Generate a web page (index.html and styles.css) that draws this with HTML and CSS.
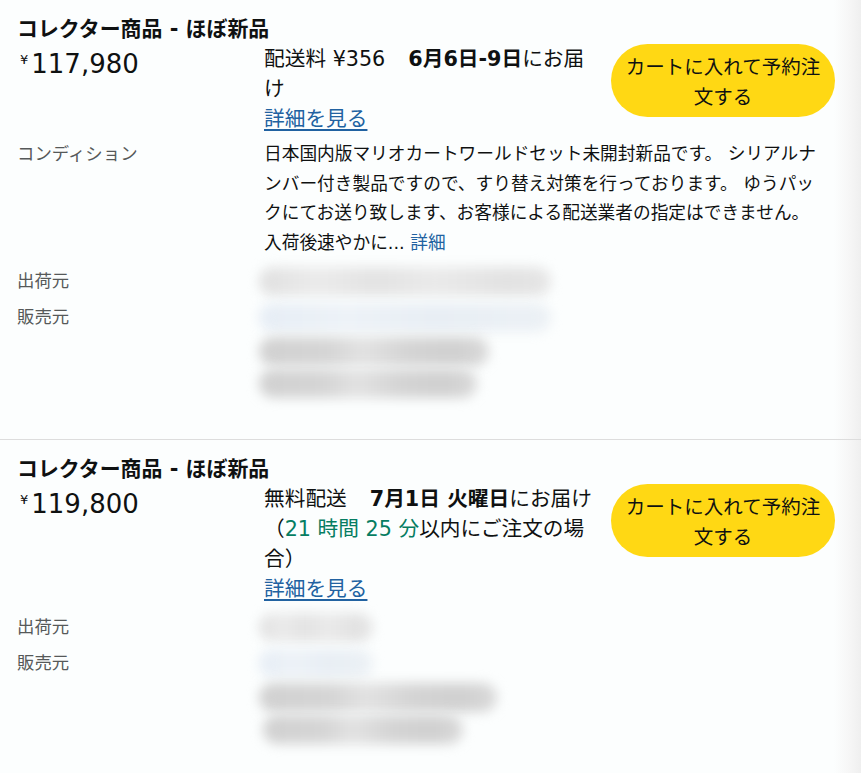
FILE: index.html
```html
<!DOCTYPE html>
<html lang="ja">
<head>
<meta charset="utf-8">
<title>出品者一覧</title>
<link rel="stylesheet" href="styles.css">
</head>
<body>
<div class="page">
  <section class="offer first">
    <h2 class="title">コレクター商品 - ほぼ新品</h2>
    <div class="main">
      <div class="price"><span class="yen">¥</span>117,980</div>
      <div class="delivery">
        <div>配送料 ¥356<b class="date">6月6日-9日</b>にお届<br>け</div>
        <div><a class="link" href="#">詳細を見る</a></div>
      </div>
      <button class="cart">カートに入れて予約注文する</button>
    </div>
    <div class="row cond">
      <div class="label cond-label">コンディション</div>
      <div class="cond-text"><span>日本国内版マリオカートワールドセット未開封新品です。 シリアルナンバー付き製品ですので、すり替え対策を行っております。 ゆうパックにてお送り致します、お客様による配送業者の指定はできません。</span><br><span>入荷後速やかに... </span><span class="more">詳細</span></div>
    </div>
    <div class="row info"><div class="label">出荷元</div><div class="value"><div class="blob gray w292"></div></div></div>
    <div class="row info"><div class="label">販売元</div><div class="value"><div class="blob blue w292"></div></div></div>
    <div class="row sub"><div class="label"></div><div class="value"><div class="blob dark w230"></div></div></div>
    <div class="row sub"><div class="label"></div><div class="value"><div class="blob dark w218"></div></div></div>
  </section>

  <section class="offer">
    <h2 class="title">コレクター商品 - ほぼ新品</h2>
    <div class="main">
      <div class="price"><span class="yen">¥</span>119,800</div>
      <div class="delivery">
        <div>無料配送<b class="date">7月1日 火曜日</b>にお届け<br>（<span class="green">21 時間 25 分</span>以内にご注文の場<br>合）</div>
        <div><a class="link" href="#">詳細を見る</a></div>
      </div>
      <button class="cart">カートに入れて予約注文する</button>
    </div>
    <div class="row info"><div class="label">出荷元</div><div class="value"><div class="blob gray w112"></div></div></div>
    <div class="row info"><div class="label">販売元</div><div class="value"><div class="blob blue w112"></div></div></div>
    <div class="row sub"><div class="label"></div><div class="value"><div class="blob dark w236"></div></div></div>
    <div class="row sub"><div class="label"></div><div class="value"><div class="blob dark w200 shift"></div></div></div>
  </section>
</div>
</body>
</html>
```

FILE: styles.css
```css
html, body {
  margin: 0;
  padding: 0;
}
body {
  width: 861px;
  height: 773px;
  overflow: hidden;
  background: linear-gradient(to right, #fcfefe 0, #fcfefe 834px, #f7f7f7 848px, #efefef 861px);
  font-family: "DejaVu Sans", "Noto Sans CJK JP", sans-serif;
  color: #0f1111;
}
.offer {
  padding: 15px 0 0 17px;
}
.offer.first {
  padding-bottom: 40px;
  border-bottom: 1px solid #dddddd;
}
.title {
  margin: 0 0 1px;
  font-size: 20.9px;
  line-height: 28px;
  font-weight: 700;
}
.main {
  display: flex;
  align-items: flex-start;
}
.price {
  width: 247px;
  font-size: 26px;
  line-height: 32px;
}
.yen {
  font-size: 13px;
  vertical-align: 9px;
  margin-left: 3px;
  margin-right: 3px;
}
.delivery {
  width: 340px;
  font-size: 20.7px;
  line-height: 30px;
}
.date {
  font-weight: 700;
  margin-left: 23px;
}
.green {
  color: #067d62;
}
.link {
  color: #2162a1;
  text-decoration: underline;
  text-underline-offset: 3px;
}
.cart {
  margin: 0 0 0 7px;
  width: 224px;
  height: 73px;
  box-sizing: border-box;
  padding: 0 12px;
  border: none;
  border-radius: 37px;
  background: #ffd814;
  color: #0f1111;
  font-family: "Noto Sans CJK JP", sans-serif;
  font-size: 19.5px;
  line-height: 30px;
  text-align: center;
}
.row {
  display: flex;
}
.label {
  width: 247px;
  flex: none;
  color: #565959;
  font-size: 17.4px;
}
.cond {
  margin-top: 6px;
}
.cond-label {
  line-height: 29.5px;
}
.cond-text {
  width: 562px;
  font-size: 17.7px;
  line-height: 29.5px;
}
.more {
  color: #2162a1;
}
.info {
  height: 36px;
  line-height: 36px;
}
.cond + .info {
  margin-top: 5px;
}
.main + .info {
  margin-top: 5px;
}
.sub {
  height: 32px;
}
.value {
  display: flex;
  align-items: center;
  height: 100%;
}
.blob {
  height: 29px;
  margin-left: -5px;
  border-radius: 15px;
  filter: blur(6px);
}
.gray {
  background: linear-gradient(90deg, #e0e0e0 0, #ebebeb 20%, #e3e3e3 40%, #eaeaea 60%, #e2e2e2 85%, #e6e6e6 100%);
}
.blue {
  background: linear-gradient(90deg, #e6edf5 0, #edf2f7 30%, #e8eef4 60%, #ecf1f5 100%);
}
.dark {
  background: linear-gradient(90deg, #d1d1d1 0, #d5d5d5 30%, #e2e2e2 45%, #d4d4d4 65%, #d0d0d0 85%, #dadada 100%);
}
.w292 { width: 292px; }
.w230 { width: 230px; }
.w218 { width: 218px; }
.w112 { width: 114px; }
.w236 { width: 238px; }
.w200 { width: 200px; }
.shift { margin-left: -1px; }
```
